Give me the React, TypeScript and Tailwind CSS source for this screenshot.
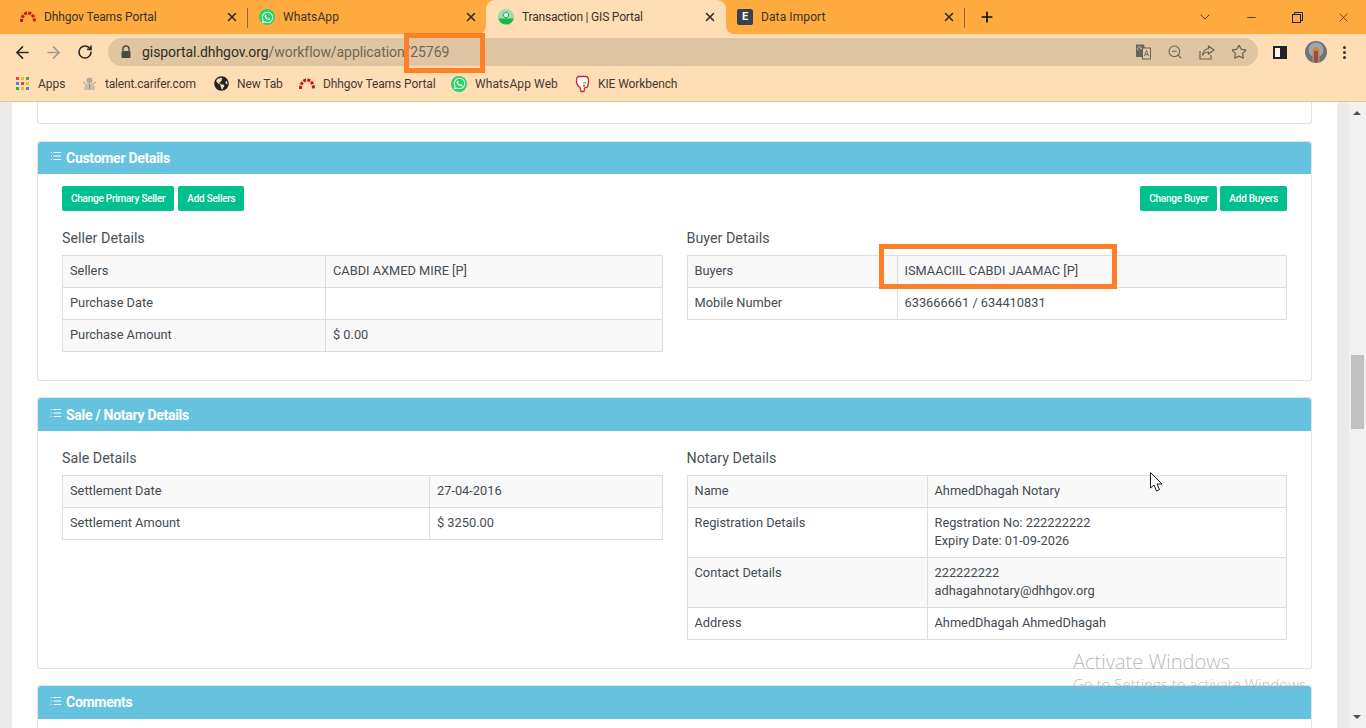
import React from "react";
import { ArrowLeft, ArrowRight, RotateCw, X, Plus, ChevronDown, Minus, ZoomOut, Star, List } from "lucide-react";
import { FaGlobeAmericas, FaWhatsapp } from "react-icons/fa";

const Arc = () => (
  <svg width="16" height="16" viewBox="0 0 16 16" className="shrink-0">
    <path d="M1.5 13 C1.5 1 14.5 1 14.5 13" fill="none" stroke="#c2181f" strokeWidth="3" strokeDasharray="3 1.2" />
  </svg>
);
const Wa = ({ s = 16 }: { s?: number }) => (
  <span className="flex items-center justify-center rounded-full bg-[#25d366] shrink-0" style={{ width: s, height: s }}>
    <FaWhatsapp color="#fff" size={s - 3} />
  </span>
);
const Gis = () => (
  <svg width="16" height="16" viewBox="0 0 16 16" className="shrink-0">
    <circle cx="8" cy="8" r="8" fill="#9fdca8" />
    <path d="M0.3 9.5 H15.7 A8 8 0 0 1 0.3 9.5Z" fill="#19b84a" />
    <circle cx="8" cy="6" r="2.6" fill="#fff" stroke="#19b84a" />
  </svg>
);
const Kie = () => (
  <svg width="15" height="18" viewBox="0 0 15 18" className="shrink-0">
    <path d="M3 1.5 H11 Q14 2 13.5 7 L12.5 12 L9.5 13 L9 16.5 H6 L5 12.5 Q1 10 1.5 5 Q1.5 2.5 3 1.5Z" fill="#fff" stroke="#d8232a" strokeWidth="1.3" />
    <rect x="8" y="7" width="3" height="2" fill="#f5b81e" />
    <rect x="8" y="10" width="2" height="1.5" fill="#2f78c4" />
  </svg>
);

function Tab({ icon, title, active, sep, track }: { icon: React.ReactNode; title: string; active?: boolean; sep?: boolean; track: string }) {
  return (
    <div className={`relative flex items-center h-[34px] pl-3 shrink-0 ${active ? "w-[240px] -mr-px pr-[9px] bg-[#ffdeb5] rounded-t-[9px]" : "w-[239px] pr-[8px]"}`}>
      {active && (
        <>
          <span className="absolute -left-2 bottom-0 w-2 h-2 bg-[#ffdeb5]">
            <span className="block w-2 h-2 bg-[#ffab40] rounded-br-[8px]" />
          </span>
          <span className="absolute -right-2 bottom-0 w-2 h-2 bg-[#ffdeb5]">
            <span className="block w-2 h-2 bg-[#ffab40] rounded-bl-[8px]" />
          </span>
        </>
      )}
      <span className="w-4 h-4 flex items-center justify-center shrink-0">{icon}</span>
      <span className={`ml-2 flex-1 text-[12px] text-[#3a3328] whitespace-nowrap ${track}`}>{title}</span>
      <X size={14} strokeWidth={2.6} color="#2b2b2b" />
      {sep && <span className="absolute -right-px top-[8px] h-[20px] w-px bg-[#8a6a38]" />}
    </div>
  );
}

function Bookmark({ icon, label, w, track }: { icon: React.ReactNode; label: string; w: string; track: string }) {
  return (
    <div className={`flex items-center shrink-0 ${w}`}>
      <span className="w-4 h-4 flex items-center justify-center shrink-0">{icon}</span>
      <span className={`ml-2 text-[12px] text-[#3f3a33] whitespace-nowrap ${track}`}>{label}</span>
    </div>
  );
}

const Apps = () => {
  const c = ["#ea4335", "#fbbc04", "#34a853", "#4285f4", "#ea4335", "#fbbc04", "#34a853", "#fbbc04", "#4285f4"];
  return (
    <span className="grid grid-cols-3 gap-[2px] w-[13px]">
      {c.map((x, i) => (
        <span key={i} className="w-[3px] h-[3px]" style={{ background: x }} />
      ))}
    </span>
  );
};

function Row({ cells }: { cells: [string, React.ReactNode] }) {
  return (
    <tr className="odd:bg-[#f9f9f9]">
      <td className="border border-[#dddddd] pl-[7px] pr-[7px] pt-[6px] pb-[7px] leading-[18px] align-top">{cells[0]}</td>
      <td className="border border-[#dddddd] pl-[7px] pr-[7px] pt-[6px] pb-[7px] leading-[18px] align-top">{cells[1]}</td>
    </tr>
  );
}

function DataTable({ col, rows }: { col: string; rows: [string, React.ReactNode][] }) {
  return (
    <table className="w-full table-fixed border-collapse text-[12.8px] text-[#444b52]">
      <colgroup>
        <col className={col} />
        <col />
      </colgroup>
      <tbody>
        {rows.map((r, i) => (
          <Row key={i} cells={r} />
        ))}
      </tbody>
    </table>
  );
}

function CardHead({ title, h }: { title: string; h: string }) {
  return (
    <div className={`flex items-center ${h} bg-[#66c3e0] rounded-t-[3px] pl-[12px] shrink-0`}>
      <List size={12} color="#fff" strokeWidth={2.2} className="mb-[4px]" />
      <span className="ml-[4px] text-[14px] font-bold tracking-[-0.28px] text-white">{title}</span>
    </div>
  );
}

function Btn({ children }: { children: React.ReactNode }) {
  return (
    <button className="h-[25px] px-[9px] rounded-[2px] bg-[#00c08e] text-white text-[10px] font-medium tracking-[-0.25px] whitespace-nowrap">
      {children}
    </button>
  );
}

function Section({ title, rows, col }: { title: string; rows: [string, React.ReactNode][]; col: string }) {
  return (
    <div>
      <h4 className="text-[14.3px] leading-[18px] text-[#4b5258] mb-[8px]">{title}</h4>
      <DataTable col={col} rows={rows} />
    </div>
  );
}

export default function App() {
  return (
    <div className="relative w-[1366px] h-[728px] overflow-hidden flex flex-col bg-white font-['Roboto',sans-serif]">
      {/* tab strip */}
      <div className="flex items-center h-[34px] bg-[#ffab40] pl-2 shrink-0">
        <Tab icon={<Arc />} title="Dhhgov Teams Portal" sep track="tracking-[-0.1px]" />
        <Tab icon={<Wa />} title="WhatsApp" track="tracking-[0.1px]" />
        <Tab icon={<Gis />} title="Transaction | GIS Portal" active track="tracking-[-0.2px]" />
        <Tab
          icon={<span className="w-4 h-4 rounded-[2px] bg-[#37424f] text-white text-[11px] leading-4 text-center font-bold">E</span>}
          title="Data Import"
          sep
          track="tracking-[0.1px]"
        />
        <Plus size={16} strokeWidth={2.6} color="#111" className="ml-[15px]" />
        <div className="ml-auto flex items-center">
          <span className="w-[46px] flex justify-center"><ChevronDown size={16} strokeWidth={1.2} color="#222" /></span>
          <span className="w-[46px] flex justify-center"><Minus size={13} strokeWidth={1.4} color="#222" /></span>
          <span className="w-[46px] flex justify-center">
            <svg width="11" height="11" viewBox="0 0 11 11" fill="none" stroke="#222" strokeWidth="1">
              <rect x="0.5" y="2.5" width="8" height="8" />
              <path d="M2.5 2.5V0.5H10.5V8.5H8.5" />
            </svg>
          </span>
          <span className="w-[46px] flex justify-center"><X size={15} strokeWidth={1} color="#222" /></span>
        </div>
      </div>
      {/* toolbar */}
      <div className="flex items-center h-[34px] pt-[2px] bg-[#ffdeb5] shrink-0">
        <span className="w-[44px] pl-[13px]"><ArrowLeft size={19} strokeWidth={2.1} color="#2b2b2b" /></span>
        <span className="w-[32px] pl-[0px]"><ArrowRight size={19} strokeWidth={2.1} color="#a39a8c" /></span>
        <span className="w-[32px] pl-[1px]"><RotateCw size={16} strokeWidth={2.4} color="#2b2b2b" /></span>
        <div className="flex items-center w-[1150px] h-[28px] rounded-full bg-[#dfc5a1] pl-[12px] pr-[11px]">
          <svg width="12" height="14" viewBox="0 0 12 14" className="shrink-0">
            <path d="M3 6V4a3 3 0 0 1 6 0V6" fill="none" stroke="#4a4a44" strokeWidth="1.4" />
            <rect x="1.5" y="6" width="9" height="7" rx="1" fill="#4a4a44" />
          </svg>
          <span className="ml-[10px] text-[14px] tracking-[-0.07px] whitespace-nowrap">
            <span className="text-[#2f2c26]">gisportal.dhhgov.org</span>
            <span className="text-[#6f6757]">/workflow/application/25769</span>
          </span>
          <div className="ml-auto flex items-center gap-[16px]">
            <svg width="16" height="16" viewBox="0 0 16 16">
              <path d="M1 0.5H9L12 13H1Z" fill="#68645c" />
              <path d="M3.5 6.5a2 2 0 1 1 3-1.8H4.8" fill="none" stroke="#dfc5a1" strokeWidth="1" />
              <rect x="7.5" y="4" width="8" height="11" fill="#dfc5a1" stroke="#68645c" />
              <path d="M9.5 12L11.5 6.5L13.5 12M10.2 10.5H12.8" fill="none" stroke="#68645c" strokeWidth="0.9" />
            </svg>
            <ZoomOut size={16} strokeWidth={1.6} color="#68645c" />
            <svg width="16" height="16" viewBox="0 0 16 16" fill="none" stroke="#68645c" strokeWidth="1.2">
              <path d="M1 7V15H12V11" />
              <path d="M9.5 2L15 6L9.5 10V8C6.5 8 5 9 3.5 11.5C4 7.5 6 5 9.5 4.5Z" />
            </svg>
            <Star size={16} strokeWidth={1.8} color="#68645c" />
          </div>
        </div>
        <span className="ml-[15px] flex w-[14px] h-[13px] border-2 border-[#222] bg-[#fff3e2]">
          <span className="ml-auto w-[5px] h-full bg-[#222]" />
        </span>
        <svg width="22" height="22" viewBox="0 0 22 22" className="ml-[18px] shrink-0">
          <circle cx="11" cy="11" r="11" fill="#6f747c" />
          <circle cx="11" cy="9" r="7.5" fill="#a3a7ad" />
          <path d="M7.5 21V9Q11 3 14.5 9V21Z" fill="#c4883a" />
          <path d="M9 21V10H13V21Z" fill="#c23b33" />
          <path d="M10.3 21V12H11.7V21Z" fill="#3b6fa8" />
        </svg>
        <span className="ml-[16px] flex flex-col gap-[2px]">
          <span className="w-[3px] h-[3px] rounded-full bg-[#333]" />
          <span className="w-[3px] h-[3px] rounded-full bg-[#333]" />
          <span className="w-[3px] h-[3px] rounded-full bg-[#333]" />
        </span>
      </div>
      {/* bookmarks */}
      <div className="flex items-center h-[34px] pb-[2px] bg-[#ffdeb5] border-b border-[#e8c594] pl-[14px] shrink-0">
        <Bookmark w="w-[67px]" icon={<Apps />} label="Apps" track="tracking-[0px]" />
        <Bookmark
          w="w-[132px]"
          icon={
            <svg width="15" height="15" viewBox="0 0 15 15">
              <circle cx="7.5" cy="4.5" r="3" fill="#b7ad9e" />
              <path d="M2 14 Q2 7 7.5 7 Q13 7 13 14Z" fill="#c9bfae" />
              <path d="M1 6L4 8M14 6L11 8M7.5 8V13" stroke="#8d8474" strokeWidth="0.8" />
            </svg>
          }
          label="talent.carifer.com"
          track="tracking-[-0.17px]"
        />
        <Bookmark w="w-[86px]" icon={<FaGlobeAmericas size={15} color="#222" />} label="New Tab" track="tracking-[-0.1px]" />
        <Bookmark w="w-[152px]" icon={<Arc />} label="Dhhgov Teams Portal" track="tracking-[-0.1px]" />
        <Bookmark w="w-[123px]" icon={<Wa />} label="WhatsApp Web" track="tracking-[0.1px]" />
        <Bookmark w="w-[110px]" icon={<Kie />} label="KIE Workbench" track="tracking-[-0.1px]" />
      </div>

      {/* page */}
      <div className="flex flex-1 min-h-0">
        <div className="w-3 bg-[#ebebeb] shrink-0" />
        <div className="flex-1 px-[25px] overflow-hidden text-[#444b52]">
          <div className="h-[22px] border border-t-0 border-[#e3e3e3] rounded-b-[3px]" />

          <div className="mt-[17px] h-[240px] border border-[#e3e3e3] border-t-[#d9e6ec] rounded-[3px]">
            <CardHead title="Customer Details" h="h-[32px]" />
            <div className="px-6 pt-[12px]">
              <div className="flex justify-between">
                <div className="flex gap-1">
                  <Btn>Change Primary Seller</Btn>
                  <Btn>Add Sellers</Btn>
                </div>
                <div className="flex gap-[3px]">
                  <Btn>Change Buyer</Btn>
                  <Btn>Add Buyers</Btn>
                </div>
              </div>
              <div className="grid grid-cols-2 gap-6 mt-[18px]">
                <Section
                  title="Seller Details"
                  col="w-[263px]"
                  rows={[
                    ["Sellers", "CABDI AXMED MIRE [P]"],
                    ["Purchase Date", ""],
                    ["Purchase Amount", "$ 0.00"],
                  ]}
                />
                <Section
                  title="Buyer Details"
                  col="w-[210px]"
                  rows={[
                    ["Buyers", "ISMAACIIL CABDI JAAMAC [P]"],
                    ["Mobile Number", "633666661 / 634410831"],
                  ]}
                />
              </div>
            </div>
          </div>

          <div className="mt-[16px] h-[272px] border border-[#e3e3e3] border-t-[#d9e6ec] rounded-[3px]">
            <CardHead title="Sale / Notary Details" h="h-[33px] pt-[1px]" />
            <div className="px-6 pt-[18px]">
              <div className="grid grid-cols-2 gap-6">
                <Section
                  title="Sale Details"
                  col="w-[367px]"
                  rows={[
                    ["Settlement Date", "27-04-2016"],
                    ["Settlement Amount", "$ 3250.00"],
                  ]}
                />
                <Section
                  title="Notary Details"
                  col="w-[240px]"
                  rows={[
                    ["Name", "AhmedDhagah Notary"],
                    ["Registration Details", <>Regstration No: 222222222<br />Expiry Date: 01-09-2026</>],
                    ["Contact Details", <>222222222<br />adhagahnotary@dhhgov.org</>],
                    ["Address", "AhmedDhagah AhmedDhagah"],
                  ]}
                />
              </div>
            </div>
          </div>

          <div className="mt-[16px] h-[80px] border border-[#e3e3e3] border-t-[#d9e6ec] rounded-[3px]">
            <CardHead title="Comments" h="h-[33px]" />
          </div>
        </div>
        <div className="w-3 bg-[#ebebeb] shrink-0" />
        <div className="relative w-[17px] bg-[#f1f1f1] shrink-0">
          <span className="absolute left-[4px] top-[9px] w-0 h-0 border-x-[4px] border-x-transparent border-b-[4px] border-b-[#505050]" />
          <span className="absolute left-[2px] top-[253px] w-[13px] h-[74px] bg-[#c1c1c1]" />
          <span className="absolute left-[4px] bottom-[9px] w-0 h-0 border-x-[4px] border-x-transparent border-t-[4px] border-t-[#505050]" />
        </div>
      </div>

      {/* annotations and overlays */}
      <div className="absolute left-[404px] top-[33px] w-[81px] h-[40px] border-[5px] border-[#ff7f27]" />
      <div className="absolute left-[879px] top-[244px] w-[238px] h-[45px] border-[5px] border-[#ff7f27]" />
      <svg className="absolute left-[1150px] top-[472px]" width="14" height="20" viewBox="0 0 14 20">
        <path d="M0.5 0.5V16L4 13L6.5 19L9.5 17.7L7 12H12Z" fill="#fff" stroke="#1a1a2a" strokeWidth="1" />
      </svg>
      <div className="absolute left-[1073px] top-[649px] text-[20px] leading-[26px] font-light text-[#a8a8a8]/80 font-['Open_Sans',sans-serif] whitespace-nowrap">
        Activate Windows
      </div>
      <div className="absolute left-[1073px] top-[675px] text-[15px] leading-[18px] font-light text-[#a8a8a8]/80 font-['Open_Sans',sans-serif] whitespace-nowrap">
        Go to Settings to activate Windows.
      </div>
    </div>
  );
}
